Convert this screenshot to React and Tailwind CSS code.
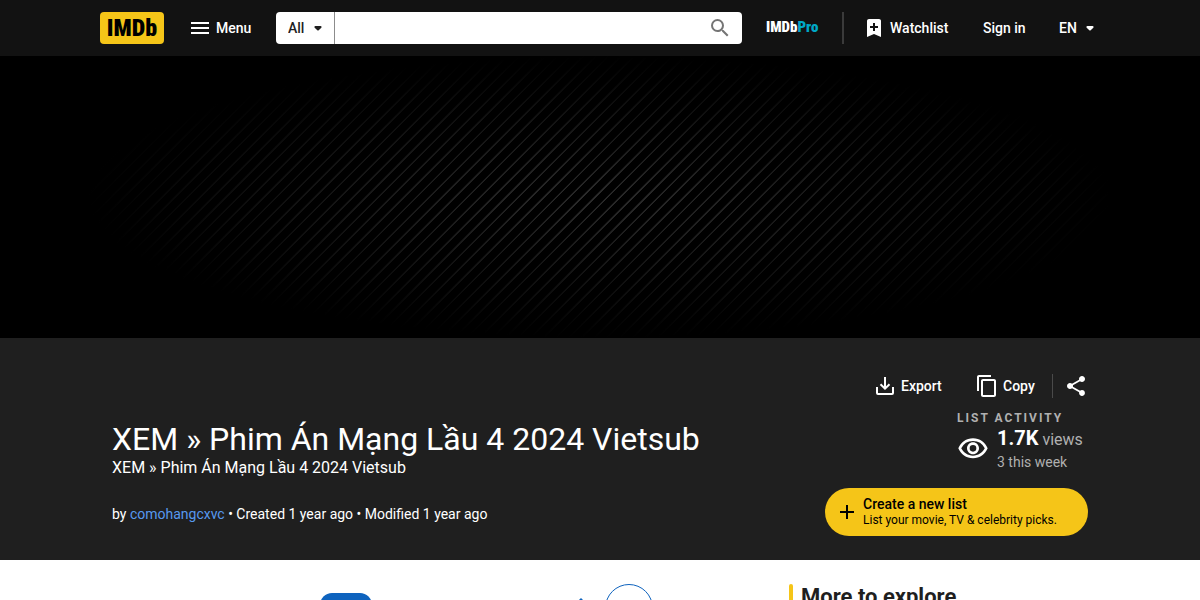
import React, { useState } from 'react';
import { MdAdd, MdContentCopy, MdMenu, MdOutlineVisibility, MdSearch, MdShare, MdSwapVert } from 'react-icons/md';

const CaretIcon = ({ className }) => (
  <svg viewBox="0 0 24 24" fill="currentColor" className={className} aria-hidden="true">
    <path d="M8.71 11.71l2.59 2.59c.39.39 1.02.39 1.41 0l2.59-2.59c.63-.63.18-1.71-.71-1.71H9.41c-.89 0-1.33 1.08-.7 1.71z" />
  </svg>
);

const WatchlistIcon = () => (
  <svg viewBox="0 0 24 24" fill="currentColor" className="size-6 shrink-0" aria-hidden="true">
    <path d="M17 3c1.05 0 1.918.82 1.994 1.851L19 5v16l-7-3-7 3V5c0-1.1.9-2 2-2h10zm-4 4h-2v3H8v2h3v3h2v-3h3v-2h-3V7z" />
  </svg>
);

const ExportIcon = () => (
  <svg viewBox="0 0 24 24" fill="none" stroke="currentColor" strokeWidth="2" className="size-6 shrink-0" aria-hidden="true">
    <path d="M12 3v11" />
    <path d="M7.5 10.2l4.5 4.4 4.5-4.4" />
    <path d="M4 13v6a1 1 0 0 0 1 1h14a1 1 0 0 0 1-1v-6" />
  </svg>
);

const Header = () => {
  const [category, setCategory] = useState('All');
  const [query, setQuery] = useState('');

  return (
    <header className="bg-[#121212] text-sm font-medium text-white">
      <div className="mx-auto flex h-14 max-w-[1024px] items-center pl-3 pr-[9px]">
        <a
          href="#home"
          aria-label="IMDb home"
          className="flex h-8 w-16 shrink-0 items-center justify-center rounded bg-[#f5c518] font-['Roboto_Condensed','Roboto',sans-serif] text-2xl font-black text-black"
        >
          IMDb
        </a>
        <button type="button" className="ml-6 flex w-16 shrink-0 items-center gap-1">
          <MdMenu className="size-6 shrink-0" />
          Menu
        </button>

        <form role="search" className="ml-6 flex h-8 min-w-0 flex-1 items-center rounded bg-white text-[#1f1f1f]">
          <div className="relative h-8 w-[59px] shrink-0 border-r border-[#8c8c8c]">
            <select
              aria-label="Search category"
              value={category}
              onChange={(e) => setCategory(e.target.value)}
              className="h-8 w-full appearance-none bg-transparent pl-3 outline-none"
            >
              <option>All</option>
              <option>Titles</option>
              <option>Lists</option>
            </select>
            <CaretIcon className="pointer-events-none absolute right-1 top-1 size-6" />
          </div>
          <input
            type="text"
            aria-label="Search IMDb"
            value={query}
            onChange={(e) => setQuery(e.target.value)}
            className="h-8 min-w-0 flex-1 px-2 outline-none"
          />
          <button type="submit" aria-label="Submit search" className="mr-2.5 text-[#757575]">
            <MdSearch className="size-6" />
          </button>
        </form>

        <a
          href="#pro"
          className="ml-6 w-[52px] shrink-0 font-['Roboto_Condensed','Roboto',sans-serif] text-[15px] font-black"
        >
          IMDb<span className="text-[#00a8c6]">Pro</span>
        </a>
        <div className="ml-6 h-8 w-0.5 shrink-0 bg-[#3a3a3a]" />
        <a href="#watchlist" className="ml-[18px] flex w-[89px] shrink-0 items-center gap-1">
          <WatchlistIcon />
          Watchlist
        </a>
        <a href="#signin" className="ml-8 w-11 shrink-0 whitespace-nowrap">Sign in</a>
        <div className="relative ml-8 mr-px w-[43px] shrink-0">
          <select aria-label="Language" className="w-full appearance-none bg-transparent outline-none">
            <option>EN</option>
            <option>FR</option>
            <option>DE</option>
          </select>
          <CaretIcon className="pointer-events-none absolute -top-0.5 right-0 size-6" />
        </div>
      </div>
    </header>
  );
};

// diagonal stripes that fade out towards the edges
const AdBanner = () => (
  <div className="bg-black">
    <div className="mx-auto h-[282px] max-w-[1024px] bg-[radial-gradient(closest-side,transparent,black),repeating-linear-gradient(135deg,black_0px,black_7px,#2c2c2c_8px,#2c2c2c_9px)]" />
  </div>
);

const ListHero = () => (
  <section className="bg-[#1f1f1f] text-white">
    <div className="mx-auto max-w-[1024px] px-6 pb-6 pt-9">
      <div className="flex h-6 items-center justify-end text-sm font-medium">
        <button type="button" className="flex w-[70px] items-center gap-1">
          <ExportIcon />
          Export
        </button>
        <button type="button" className="ml-8 flex w-[61px] items-center gap-1">
          <MdContentCopy className="size-6 shrink-0" />
          Copy
        </button>
        <div className="ml-4 mr-[11px] h-6 w-px bg-[#4a4a4a]" />
        <button type="button" aria-label="Share">
          <MdShare className="size-6" />
        </button>
      </div>

      <div className="flex items-end justify-between gap-8">
        <div className="min-w-0 pb-3">
          <h1 className="text-[32px] leading-9">XEM » Phim Án Mạng Lầu 4 2024 Vietsub</h1>
          <p className="text-base leading-[22px]">XEM » Phim Án Mạng Lầu 4 2024 Vietsub</p>
          <p className="mt-[25px] text-sm leading-5">
            by <a href="#author" className="text-[#5799ef]">comohangcxvc</a> • Created 1 year ago • Modified 1 year ago
          </p>
        </div>

        <div className="flex shrink-0 flex-col items-end">
          <div className="mt-3 w-[131px] whitespace-nowrap text-[#b0b0b0]">
            <h2 className="text-xs leading-4 font-bold tracking-[2px]">LIST ACTIVITY</h2>
            <div className="flex items-center gap-2">
              <MdOutlineVisibility className="mb-0.5 size-8 shrink-0 text-white" />
              <div>
                <p className="flex h-6 items-baseline gap-1 text-base leading-6">
                  <span className="text-xl leading-6 font-bold text-white">1.7K</span> views
                </p>
                <p className="text-sm leading-6">3 this week</p>
              </div>
            </div>
          </div>
          <button
            type="button"
            className="mt-3.5 flex h-12 w-[263px] items-center gap-1 rounded-full bg-[#f5c518] pl-2.5 text-left text-black"
          >
            <MdAdd className="size-6 shrink-0" />
            <span className="flex flex-col">
              <span className="text-sm leading-4 font-medium">Create a new list</span>
              <span className="text-xs leading-4">List your movie, TV &amp; celebrity picks.</span>
            </span>
          </button>
        </div>
      </div>
    </div>
  </section>
);

const ListBody = () => (
  <main className="bg-white text-[#1f1f1f]">
    <div className="mx-auto flex max-w-[1024px] justify-between px-6 pt-6">
      <div className="flex flex-1 items-start justify-end pr-[136px] text-[#0e63be]">
        <button type="button" aria-label="Filter" className="mt-[9px] h-8 w-[52px] rounded-xl bg-[#0e63be]" />
        <button type="button" aria-label="Sort order" className="ml-[200px] mr-[9px] mt-[11px]">
          <MdSwapVert className="size-6" />
        </button>
        <button type="button" aria-label="Change view" className="size-12 rounded-full border border-[#0e63be]" />
      </div>
      <aside className="flex w-[299px] gap-2">
        <span className="h-7 w-1 rounded-full bg-[#f5c518]" />
        <h2 className="text-[22px] leading-[26px] font-bold">More to explore</h2>
      </aside>
    </div>
  </main>
);

const App = () => (
  <div className="h-screen overflow-hidden bg-white font-['Roboto',sans-serif]">
    <Header />
    <AdBanner />
    <ListHero />
    <ListBody />
  </div>
);

export default App;
